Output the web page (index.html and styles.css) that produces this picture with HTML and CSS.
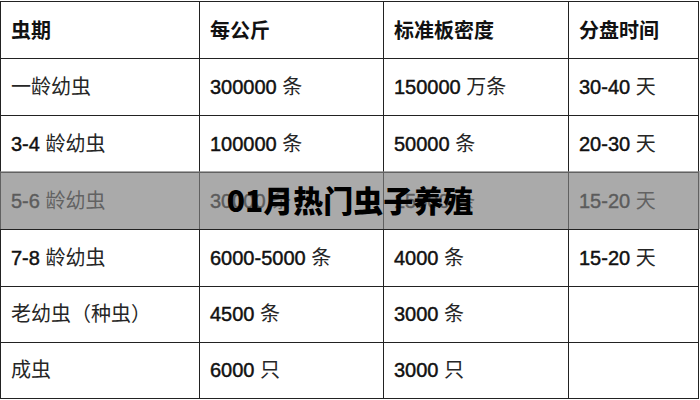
FILE: index.html
```html
<!DOCTYPE html>
<html lang="zh">
<head>
<meta charset="utf-8">
<title>01月热门虫子养殖</title>
<link rel="stylesheet" href="styles.css">
</head>
<body>
<div class="wrap">
  <table class="grid">
    <colgroup>
      <col class="c1"><col class="c2"><col class="c3"><col class="c4">
    </colgroup>
    <thead>
      <tr class="r57 head"><th>虫期</th><th>每公斤</th><th>标准板密度</th><th>分盘时间</th></tr>
    </thead>
    <tbody>
      <tr class="r57"><td>一龄幼虫</td><td><span class="num">300000</span> 条</td><td><span class="num">150000</span> 万条</td><td><span class="num">30-40</span> 天</td></tr>
      <tr class="r57"><td><span class="num">3-4</span> 龄幼虫</td><td><span class="num">100000</span> 条</td><td><span class="num">50000</span> 条</td><td><span class="num">20-30</span> 天</td></tr>
      <tr class="r57"><td><span class="num">5-6</span> 龄幼虫</td><td><span class="num">30000</span> 条</td><td><span class="num">15000</span> 条</td><td><span class="num">15-20</span> 天</td></tr>
      <tr class="r57"><td><span class="num">7-8</span> 龄幼虫</td><td><span class="num">6000-5000</span> 条</td><td><span class="num">4000</span> 条</td><td><span class="num">15-20</span> 天</td></tr>
      <tr class="r56"><td>老幼虫（种虫）</td><td><span class="num">4500</span> 条</td><td><span class="num">3000</span> 条</td><td></td></tr>
      <tr class="r56"><td>成虫</td><td><span class="num">6000</span> 只</td><td><span class="num">3000</span> 只</td><td></td></tr>
    </tbody>
  </table>
  <div class="band"><span class="title">01月热门虫子养殖</span></div>
</div>
</body>
</html>
```
FILE: styles.css
```css
html, body {
  margin: 0;
  padding: 0;
  background: #ffffff;
}
.wrap {
  position: relative;
  width: 700px;
  height: 400px;
  overflow: hidden;
  padding-top: 1px;
  box-sizing: border-box;
}
.grid {
  border-collapse: collapse;
  table-layout: fixed;
  width: 698px;
  font-family: "Liberation Sans", "Noto Sans CJK SC", sans-serif;
  font-size: 20px;
  color: #262626;
}
.c1 { width: 199px; }
.c2 { width: 184px; }
.c3 { width: 185px; }
.c4 { width: 130px; }
.grid th, .grid td {
  border: 1px solid #222;
  text-align: left;
  vertical-align: middle;
  padding: 0 8px 4px 10px;
  white-space: nowrap;
  overflow: hidden;
}
.grid th {
  font-weight: bold;
  color: #111;
  padding-bottom: 2px;
}
.num {
  color: #111;
  -webkit-text-stroke: 0.45px #111;
}
.r57 { height: 57px; }
.r56 { height: 56px; }
.band {
  position: absolute;
  left: 0;
  right: 0;
  top: 171px;
  height: 58px;
  background: rgba(128, 128, 128, 0.67);
  display: flex;
  align-items: center;
  justify-content: center;
}
.title {
  font-family: "Noto Sans CJK SC", "Liberation Sans", sans-serif;
  font-weight: 900;
  font-size: 30px;
  color: #000;
  margin-top: -2px;
}
```
